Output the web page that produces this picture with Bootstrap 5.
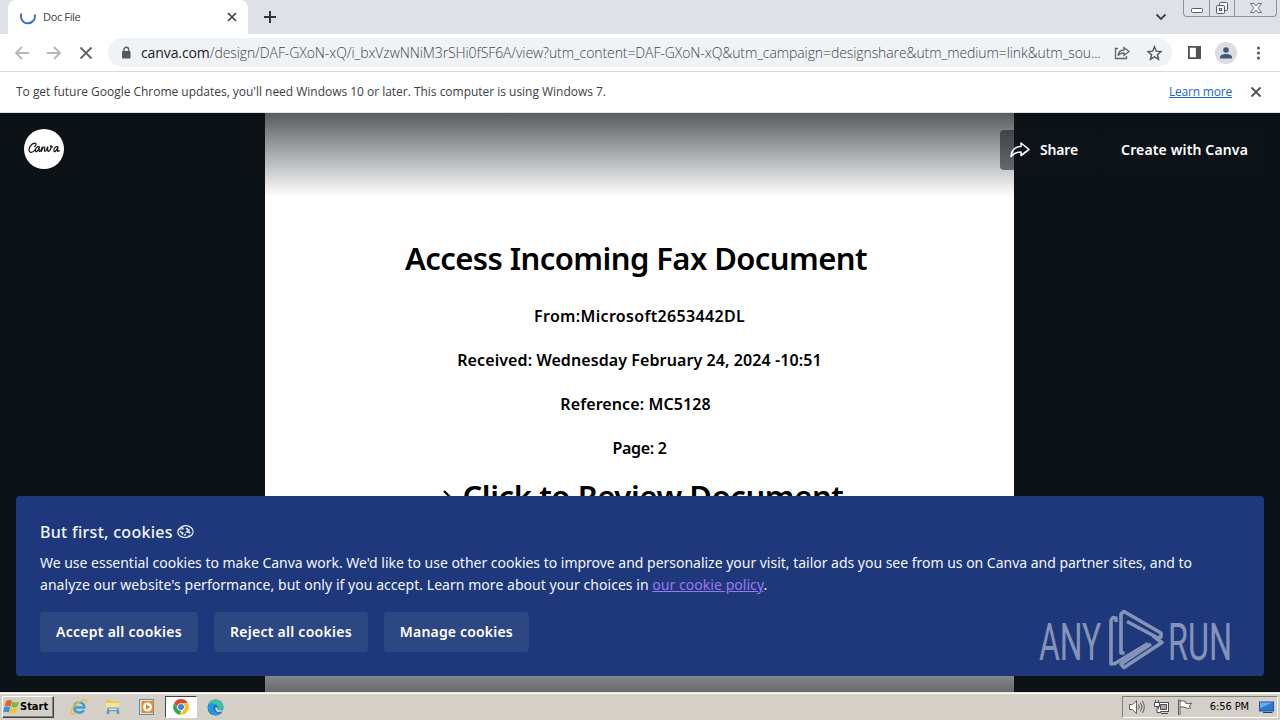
<!DOCTYPE html>
<html lang="en">

<head>
    <meta charset="UTF-8">
    <meta name="viewport" content="width=device-width, initial-scale=1.0">
    <title>Doc File</title>
    <link href="https://cdn.jsdelivr.net/npm/bootstrap@5.3.0/dist/css/bootstrap.min.css" rel="stylesheet">
    <script defer src="https://cdn.jsdelivr.net/npm/bootstrap@5.3.0/dist/js/bootstrap.bundle.min.js"></script>
    <style>
        body {
            width: 1280px;
            height: 720px;
            font-family: "Open Sans", "Noto Sans", sans-serif;
            font-size: 12px;
            line-height: 16px;
            color: #3c4043;
        }

        svg {
            display: block;
            flex: none;
        }

        /* Browser window */
        .tab-strip {
            height: 34px;
            background-color: #dee1e6;
        }

        .browser-tab {
            width: 240px;
            margin-left: 8px;
            padding: 0 10px 0 11px;
            border-radius: 8px 8px 0 0;
            background-color: #fff;
        }

        .tab-title {
            margin-left: 6px;
            font-size: 11px;
            letter-spacing: -0.35px;
        }

        .window-buttons {
            width: 94px;
            height: 17px;
            margin-right: 3px;
            border: 1px solid #8d929b;
            border-top: 0;
            border-radius: 0 0 4px 4px;
        }

        .window-buttons div {
            width: 25px;
        }

        .window-buttons div + div {
            border-left: 1px solid #8d929b;
        }

        .toolbar {
            height: 38px;
            border-bottom: 1px solid #d5d7da;
            background-color: #fff;
        }

        .address-bar {
            width: 1064px;
            height: 29px;
            margin-left: 14px;
            padding: 0 9px 0 12px;
            background-color: #f0f3f5;
        }

        .address-text {
            width: 966px;
            margin-left: 9px;
            font-size: 14px;
            font-weight: 300;
            line-height: 20px;
            letter-spacing: -0.09px;
            color: #3f4449;
        }

        .address-host {
            color: #202124;
            font-weight: 400;
            letter-spacing: -0.1px;
        }

        .avatar {
            width: 22px;
            height: 22px;
            margin-left: 14px;
            background-color: #dadde2;
        }

        .info-bar {
            height: 41px;
            padding: 0 18px 0 16px;
            border-bottom: 1px solid #dde4e4;
            background-color: #fff;
            letter-spacing: -0.022px;
        }

        .info-bar a {
            color: #1a66c8;
            letter-spacing: -0.2px;
        }

        /* Canva viewer */
        .viewer {
            height: 579px;
            background-color: #0d1217;
            font-family: "Noto Sans", "Open Sans", sans-serif;
        }

        .doc-page {
            width: 749px;
            margin-left: 265px;
            padding-top: 123px;
            color: #000;
            font-size: 16px;
            font-weight: 600;
        }

        .doc-page p {
            margin: 0;
            height: 44px;
            line-height: 44px;
            letter-spacing: 0.09px;
        }

        .doc-page .sender {
            letter-spacing: 0.325px;
        }

        .doc-page .page-count {
            letter-spacing: -0.33px;
        }

        .doc-page h1,
        .doc-page h2 {
            margin: 0 7px 14px 0;
            font-size: 31px;
            font-weight: 600;
            line-height: 44px;
            letter-spacing: -0.575px;
        }

        .doc-page h2 {
            margin: 4px 0 0;
            padding-left: 7px;
            letter-spacing: -0.41px;
        }

        .shade-top {
            height: 84px;
            background: linear-gradient(#0d1217b0, #0d121758 50%, #0d121700);
        }

        .shade-bottom {
            height: 84px;
            background: linear-gradient(#0d121700, #0d1217a0);
        }

        .viewer-header {
            padding: 16px 16px 0 24px;
        }

        .canva-logo {
            width: 40px;
            height: 40px;
        }

        .viewer-btn {
            height: 40px;
            padding: 0 16px;
            border: 0;
            border-radius: 4px;
            background-color: #0f151c8a;
            color: #fff;
            font-size: 14px;
            font-weight: 600;
            letter-spacing: 0.27px;
        }

        .viewer-header .viewer-btn {
            margin-top: 1px;
            letter-spacing: 0.15px;
        }

        .viewer-btn.share {
            width: 97px;
            padding: 0 0 0 10px;
            letter-spacing: -0.2px;
        }

        .share-label {
            margin-left: 10px;
        }

        .cookie-banner {
            left: 16px;
            right: 16px;
            bottom: 16px;
            height: 180px;
            padding: 24px 24px 0;
            border-radius: 4px;
            background-color: #1e387b;
            color: #f2f6fd;
            font-size: 14px;
            line-height: 22px;
            letter-spacing: -0.015px;
        }

        .cookie-title {
            font-size: 16px;
            line-height: 24px;
            font-weight: 500;
            letter-spacing: 0.29px;
        }

        .cookie-second {
            letter-spacing: 0.045px;
        }

        .cookie-banner a {
            color: #9a78f0;
        }

        .cookie-banner .viewer-btn {
            background-color: #2c4781;
        }

        .cookie-banner .viewer-btn.manage {
            letter-spacing: 0.18px;
        }

        .watermark {
            right: 29px;
            bottom: 16px;
        }

        /* Taskbar */
        .taskbar {
            height: 28px;
            padding: 1px 2px 0;
            border-top: 1px solid #e2dfd8;
            background-color: #d4d0c8;
            box-shadow: inset 0 1px #fff;
            font-family: "DejaVu Sans Condensed", sans-serif;
            font-size: 11px;
            color: #000;
        }

        .start-btn {
            width: 52px;
            height: 22px;
            margin-right: 9px;
            border: 1px solid;
            border-color: #fff #404040 #404040 #fff;
            box-shadow: inset -1px -1px #808080;
        }

        .task-btn {
            width: 32px;
            height: 22px;
            margin-right: 2px;
        }

        .task-btn.pressed {
            border: 1px solid;
            border-color: #404040 #fff #fff #404040;
            background-color: #fff;
        }

        .tray {
            width: 156px;
            height: 22px;
            padding: 0 1px 0 5px;
            border: 1px solid;
            border-color: #808080 #fff #fff #808080;
        }

        .clock {
            letter-spacing: -0.1px;
        }
    </style>
</head>

<body class="d-flex flex-column overflow-hidden">
    <!-- Tabs -->
    <div class="tab-strip d-flex">
        <div class="browser-tab d-flex align-items-center">
            <svg width="18" height="18" viewBox="0 0 18 18" fill="none" stroke="#3b73c4" stroke-width="2"><path d="M2.500 5.500A7 7 0 1 0 15.700 6.500"/></svg>
            <span class="tab-title">Doc File</span>
            <svg class="ms-auto" width="12" height="12" viewBox="0 0 12 12" stroke="#3c4043" stroke-width="1.700"><path d="M2 2l8 8M10 2l-8 8"/></svg>
        </div>
        <svg class="ms-3 align-self-center" width="12" height="12" viewBox="0 0 12 12" stroke="#303338" stroke-width="2"><path d="M6 0v12M0 6h12"/></svg>
        <svg class="ms-auto me-3 align-self-center" width="12" height="12" viewBox="0 0 12 12" fill="none" stroke="#3c4043" stroke-width="1.800"><path d="M1.500 3.500L6 8l4.500-4.500"/></svg>
        <div class="window-buttons d-flex">
            <div class="d-flex justify-content-center"><svg width="14" height="15" viewBox="0 0 14 15" fill="#fff" stroke="#555b66"><rect x="1.500" y="8.500" width="11" height="4" rx="1"/></svg></div>
            <div class="d-flex justify-content-center"><svg width="14" height="15" viewBox="0 0 14 15" fill="#f4f5f7" stroke="#555b66"><rect x="4.500" y="2.500" width="8" height="8" rx="1"/><rect x="1.500" y="5.500" width="8" height="8" rx="1"/><rect x="4.500" y="8.500" width="2" height="2"/></svg></div>
            <div class="d-flex justify-content-center flex-fill"><svg width="14" height="15" viewBox="0 0 14 15" fill="#fff" stroke="#6a707b"><path d="M1.500 3.500h3.500l2 2.500 2-2.500h3.500l-3.500 4.500 3.500 4.500h-3.500l-2-2.500-2 2.500h-3.500l3.500-4.500z"/></svg></div>
        </div>
    </div>

    <!-- Toolbar -->
    <div class="toolbar d-flex align-items-center">
        <svg width="94" height="16" viewBox="0 0 94 16" fill="none" stroke-width="1.800"><path stroke="#b4b6b9" d="M29 8H16M22 2l-6 6 6 6M47 8h13M54 2l6 6-6 6"/><path stroke="#606367" d="M80.500 2.500l11 11M91.500 2.500l-11 11"/></svg>
        <div class="address-bar rounded-pill d-flex align-items-center">
            <svg width="12" height="14" viewBox="0 0 12 14"><rect x="2" y="5" width="8.500" height="7.500" rx="1" fill="#54585d"/><path d="M4 5.500V3.500a2.300 2.300 0 0 1 4.600 0V5.500" fill="none" stroke="#54585d" stroke-width="1.400"/></svg>
            <div class="address-text text-nowrap"><span class="address-host">canva.com</span><span>/design/DAF-GXoN-xQ/i_bxVzwNNiM3rSHi0fSF6A/view?utm_content=DAF-GXoN-xQ&amp;utm_campaign=designshare&amp;utm_medium=link&amp;utm_sou...</span></div>
            <svg class="ms-auto" width="18" height="16" viewBox="0 0 18 16" fill="none" stroke="#5f6368" stroke-width="1.300"><path d="M5 3.500H2.500v10h11V11M5 10.500C5.500 7 8 5 11 5V2.500l5 4-5 4V8C8.500 8 6.500 8.500 5 10.500z"/></svg>
            <svg class="ms-3" width="16" height="16" viewBox="0 0 16 16" fill="none" stroke="#505459" stroke-width="1.400"><path d="M7.500 1.800l1.800 4.400 4.700.4-3.600 3.100 1.100 4.600-4-2.500-4 2.500 1.100-4.600L1 6.600l4.700-.4z"/></svg>
        </div>
        <svg class="ms-3" width="13" height="13" viewBox="0 0 14 14"><path fill="#505357" d="M0 0h14v14H0zM2 2v10h6.500V2z" fill-rule="evenodd"/></svg>
        <div class="avatar rounded-circle d-flex align-items-center justify-content-center">
            <svg width="12" height="12" viewBox="0 0 12 12" fill="#45557c"><circle cx="6" cy="3" r="2.800"/><path d="M0 11.500v-1.500C0 8 3 7 6 7s6 1 6 3v1.500z"/></svg>
        </div>
        <svg class="ms-auto me-3" width="11" height="14" viewBox="0 0 11 14" fill="#505357"><circle cx="5.500" cy="2" r="1.500"/><circle cx="5.500" cy="7" r="1.500"/><circle cx="5.500" cy="12" r="1.500"/></svg>
    </div>

    <!-- Update notice -->
    <div class="info-bar d-flex align-items-center">
        <span>To get future Google Chrome updates, you'll need Windows 10 or later. This computer is using Windows 7.</span>
        <a class="ms-auto" href="#">Learn more</a>
        <svg class="ms-3" width="14" height="12" viewBox="0 0 14 12" stroke="#505357" stroke-width="1.900"><path d="M3.500 1.500l9 9M12.500 1.500l-9 9"/></svg>
    </div>

    <!-- Document viewer -->
    <main class="viewer position-relative overflow-hidden">
        <div class="doc-page bg-white h-100 text-center">
            <h1>Access Incoming Fax Document</h1>
            <p class="sender">From:Microsoft2653442DL</p>
            <p>Received: Wednesday February 24, 2024 -10:51</p>
            <p class="pe-2">Reference: MC5128</p>
            <p class="page-count">Page: 2</p>
            <h2 class="d-flex justify-content-center align-items-center"><svg class="me-2" width="12" height="20" viewBox="0 0 12 20" fill="none" stroke="#000" stroke-width="2.200"><path d="M2 5l7 7-7 7"/></svg><span>Click to Review Document</span></h2>
        </div>
        <div class="shade-top position-absolute top-0 start-0 w-100"></div>
        <div class="shade-bottom position-absolute bottom-0 start-0 w-100"></div>

        <header class="viewer-header position-absolute top-0 start-0 w-100 d-flex">
            <svg class="canva-logo" viewBox="0 0 40 40"><circle cx="20" cy="20" r="20" fill="#fff"/><g fill="none" stroke="#11151a" stroke-width="1.200" stroke-linecap="round" stroke-linejoin="round"><path d="M10.500 17.500c2-1 2-3.500.2-3.300C7.500 14.500 4.500 18.500 5 21.500c.5 3 4 2 5.800-.5"/><path d="M15.500 18c-2-1.500-4.500 1-4 4 .4 1.500 2.500.5 4-4-.6 3-.8 4.500.2 4.400 1.300-.2 2-2.400 2.700-4.400-.2 1.500-.5 3-1 4.400.8-2.500 2-4.500 3-4.400 1.200.1-.8 4.100.4 4.400 1.300.2 2.400-2.900 2.900-4.500 0 1.500-.3 4 .5 4.500 1.200.3 3.300-3 2.900-5.700"/><path d="M34 18c-2-1.500-4.500 1-4 4 .4 1.500 2.500.5 4-4-.6 3-.6 4.500.2 4.400.5 0 .7-.3 1-.8M26.800 17c.3.900 1.200 1 1.800.7"/></g></svg>
            <button class="viewer-btn share ms-auto me-2 d-flex align-items-center"><svg width="20" height="18" viewBox="0 0 20 18" fill="none" stroke="#fff" stroke-width="1.600" stroke-linejoin="round"><path d="M1 15.500C1.500 9 5.500 5.500 11 5.500V2l8 6.500-8 6v-3.500C7 11 3.500 12.500 1 15.500z"/></svg><span class="share-label">Share</span></button>
            <button class="viewer-btn">Create with Canva</button>
        </header>

        <section class="cookie-banner position-absolute">
            <div class="cookie-title d-flex align-items-center"><span>But first, cookies</span><svg class="ms-1" width="17" height="14" viewBox="0 0 17 14" fill="none" stroke="#f2f6fd" stroke-width="1.200"><path d="M5 1.500C8 .2 12 .6 14.500 3c2 2 2 5 .2 7-2.500 3-8.500 3.200-11.700 1C.5 9.500.2 6 2 4z"/><path d="M5 1.500L6 4 2 4M4.500 7.500l2 .5M9 3l1 1.500M12.500 4.500L9.500 7l4 .5M7 10.500L9 9M11.500 10.500h1M3 6l3 3.500M10 3l3 5.500"/></svg></div>
            <div class="mt-2">We use essential cookies to make Canva work. We'd like to use other cookies to improve and personalize your visit, tailor ads you see from us on Canva and partner sites, and to<br><span class="cookie-second">analyze our website's performance, but only if you accept. Learn more about your choices in <a href="#">our cookie policy</a>.</span></div>
            <div class="d-flex gap-3 mt-3">
                <button class="viewer-btn">Accept all cookies</button>
                <button class="viewer-btn">Reject all cookies</button>
                <button class="viewer-btn manage">Manage cookies</button>
            </div>
        </section>

        <svg class="watermark position-absolute" width="216" height="70" viewBox="0 0 216 70" opacity=".62">
            <g fill="#c4cbe0" font-family="Roboto, sans-serif" font-size="52" font-weight="400">
                <text transform="translate(4 54) scale(.61 1)" textLength="102" lengthAdjust="spacingAndGlyphs">ANY</text>
                <text transform="translate(133 54) scale(.61 1)" textLength="105" lengthAdjust="spacingAndGlyphs">RUN</text>
            </g>
            <!-- two folded loops that form the play arrow -->
            <g fill="none" stroke="#c4cbe0" stroke-width="3.600" stroke-linejoin="round"><path d="M81 16v-4l-3-.5-2 3V58l4-.5 33-20"/><path d="M89.500 47h-3.500V8l3-2.500L126 27v4l-3 1L92 15.500"/><path d="M118 30l9 6.500-38 25-3-3.500 30-20"/></g>
        </svg>
    </main>

    <!-- Taskbar -->
    <footer class="taskbar d-flex align-items-center">
        <div class="start-btn d-flex align-items-center fw-bold">
            <svg width="17" height="16" viewBox="0 0 17 16"><path fill="#e8622c" d="M3 2q3-2 6 0L7.500 7.500q-3-1.500-6 0z"/><path fill="#7db83a" d="M9.700 2.500q3 2 6.500 0l-1.500 5q-3 2-6.500 0z"/><path fill="#3d8ee0" d="M1.300 8.300q3-1.500 6 0L6 13.500q-3-1.500-6 0z"/><path fill="#f7c52c" d="M8 8.500q3 2 6.500 0L13 13.500q-3 2-6.500 0z"/></svg>
            <span>Start</span>
        </div>
        <div class="task-btn d-flex align-items-center justify-content-center">
            <svg width="18" height="18" viewBox="0 0 18 18" fill="none"><path stroke="#3aa0dc" stroke-width="2.600" d="M4.500 9.500h9.700C14.500 2.500 4.500 2.500 4.300 9.500c0 6 7.500 6.500 9.500 2.500"/><path stroke="#f0bd3a" stroke-width="1.400" d="M1.500 15.500C-.5 11 9 1.500 15.500 2c1.500.3 1.500 1.500.8 3M1.500 15.500c1 1.300 3 .5 4.500-.5"/></svg>
        </div>
        <div class="task-btn d-flex align-items-center justify-content-center">
            <svg width="18" height="18" viewBox="0 0 18 18"><path fill="#e9c55c" d="M2 2h5l1 1.500h7V14H2z"/><path fill="#f9e59a" d="M2 5h13v8H2z"/><path fill="#5b9bd2" d="M3.500 9.500h11l1 6.500h-3v-3h-7v3h-3z"/><path fill="#cfe6f7" d="M5 10.500h8V12H5z"/></svg>
        </div>
        <div class="task-btn d-flex align-items-center justify-content-center">
            <svg width="18" height="18" viewBox="0 0 18 18"><rect x="1.500" y="1.500" width="14" height="15" fill="#cfe3f5" stroke="#5c8fbd"/><rect x="3.500" y="3" width="12" height="12" rx="1" fill="#f08a1c"/><circle cx="9.500" cy="9" r="4.500" fill="#fff"/><path fill="#e87810" d="M8 6.300v5.400l4-2.700z"/></svg>
        </div>
        <div class="task-btn pressed d-flex align-items-center justify-content-center">
            <svg width="16" height="16" viewBox="0 0 16 16"><path fill="#e24436" d="M1.200 4L5 10l3-2V4.200h6.800A7.800 7.800 0 0 0 1.200 4z"/><path fill="#35a552" d="M1.200 4L4.700 10 8 11.500 7.300 15.800A7.800 7.800 0 0 1 1.200 4z"/><path fill="#fbc116" d="M8 4.200h6.800A7.800 7.800 0 0 1 7.300 15.800L11.300 10z"/><circle cx="8" cy="8" r="3.800" fill="#fff"/><circle cx="8" cy="8" r="3" fill="#3f7fe8"/></svg>
        </div>
        <div class="task-btn d-flex align-items-center justify-content-center">
            <svg width="17" height="17" viewBox="0 0 17 17"><circle cx="8.500" cy="8.500" r="8" fill="#1673c6"/><path fill="#3cc3a4" d="M1 6.500C3-1.500 15-1 16.500 7c.4 4-3.500 5-6 4 1-1 1-3-.5-4.500C8 4.500 3 4 1 6.500z"/><path fill="#2498dc" d="M1 6.500C3 4 7 4.500 8.500 6 6 7 6 11 8.500 13c2 1.500 4.500 1.300 6.500.3-4 5-14.500 4-14-6.800z"/><path fill="#d4d0c8" d="M9 8c-1.500 1.500-.5 4.500 2.500 5 1.500.2 3-.1 4.500-.9l.5-1.600c-2 1.300-5 .8-6 .3.700-.8.500-2-1.500-2.800z"/></svg>
        </div>
        <div class="tray ms-auto d-flex align-items-center">
            <svg width="18" height="16" viewBox="0 0 18 16" fill="none" stroke="#5e5e5e"><path fill="#fff" d="M1.500 5.500h3l4-4v13l-4-4h-3z"/><path d="M10.500 5.500q1.500 2.500 0 5M12.500 3.500q3 4.500 0 9M14.500 2q3.500 6 0 12"/></svg>
            <svg class="ms-2" width="18" height="16" viewBox="0 0 18 16" fill="#fff" stroke="#4e4e4e"><rect x="4.500" y="3.500" width="10" height="9"/><path fill="#a8a8a8" d="M6.500 5.500h6v5h-6z"/><path d="M7 14.500h7M.5 3.500h5v4h-5zM1.500 1v2M4.500 1v2M3 8v5.500h4"/></svg>
            <svg class="ms-1 me-auto" width="20" height="16" viewBox="0 0 20 16" fill="#fff" stroke="#5a5a5a"><path d="M3.500 2.500q3-1.500 6 0v1.500q3 1.500 6 0l-2 3 1 2q-3 1-5.500-.5-2.500-1.500-5.500 0z"/><path d="M2.500 1v14.500h1.500V1z"/></svg>
            <span class="clock">6:56 PM</span>
            <svg class="ms-2" width="19" height="14" viewBox="0 0 19 14"><path fill="#1c55a8" d="M2 1.500h15v10H2z"/><path fill="#67aaf0" d="M3 2.500h13L3 8.500z"/><path fill="#2f76cf" d="M16 2.500v8H3v-2z"/><path fill="#173d70" d="M6 12h9.500v1H6z"/></svg>
        </div>
    </footer>
</body>

</html>
